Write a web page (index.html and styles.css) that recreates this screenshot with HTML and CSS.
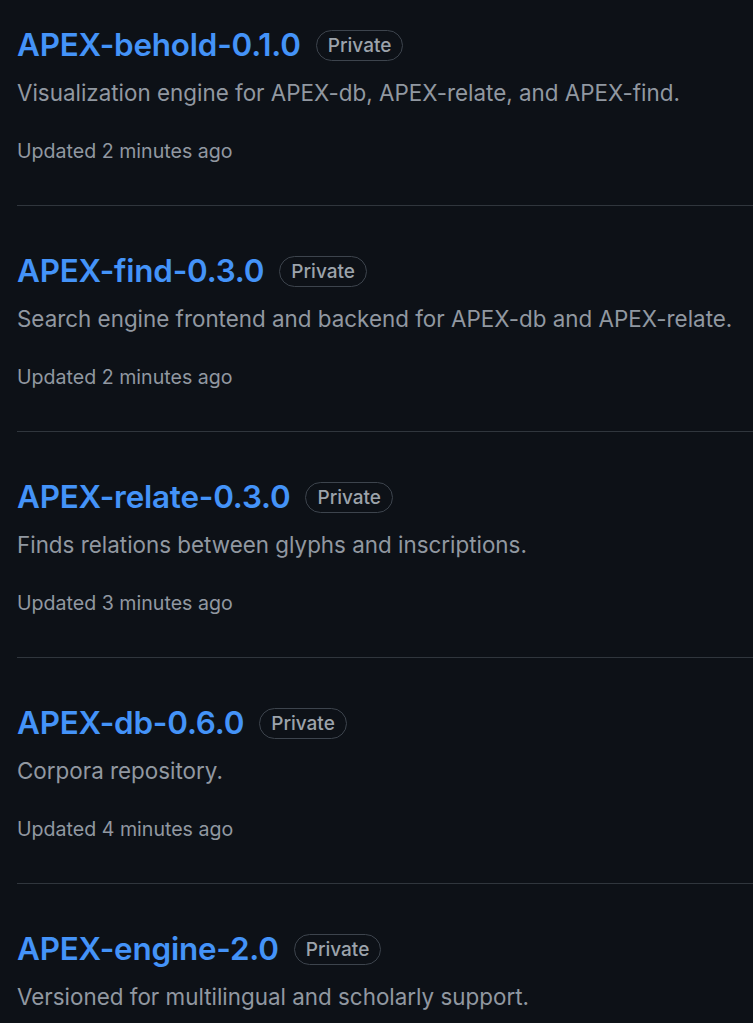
FILE: index.html
```html
<!DOCTYPE html>
<html lang="en">
<head>
<meta charset="utf-8">
<title>Repositories</title>
<link rel="stylesheet" href="styles.css">
</head>
<body>
<ul class="repo-list">
  <li class="repo">
    <div class="repo-head"><a class="repo-name" href="#">APEX-behold-0.1.0</a><span class="badge">Private</span></div>
    <p class="repo-desc">Visualization engine for APEX-db, APEX-relate, and APEX-find.</p>
    <div class="repo-meta">Updated 2 minutes ago</div>
  </li>
  <li class="repo">
    <div class="repo-head"><a class="repo-name" href="#">APEX-find-0.3.0</a><span class="badge">Private</span></div>
    <p class="repo-desc">Search engine frontend and backend for APEX-db and APEX-relate.</p>
    <div class="repo-meta">Updated 2 minutes ago</div>
  </li>
  <li class="repo">
    <div class="repo-head"><a class="repo-name" href="#">APEX-relate-0.3.0</a><span class="badge">Private</span></div>
    <p class="repo-desc">Finds relations between glyphs and inscriptions.</p>
    <div class="repo-meta">Updated 3 minutes ago</div>
  </li>
  <li class="repo">
    <div class="repo-head"><a class="repo-name" href="#">APEX-db-0.6.0</a><span class="badge">Private</span></div>
    <p class="repo-desc">Corpora repository.</p>
    <div class="repo-meta">Updated 4 minutes ago</div>
  </li>
  <li class="repo">
    <div class="repo-head"><a class="repo-name" href="#">APEX-engine-2.0</a><span class="badge">Private</span></div>
    <p class="repo-desc">Versioned for multilingual and scholarly support.</p>
  </li>
</ul>
</body>
</html>
```

FILE: styles.css
```css
html, body {
  margin: 0;
  padding: 0;
  background: #0d1117;
}
body {
  font-family: Inter, "Noto Sans", "Liberation Sans", sans-serif;
  color: #9198a1;
  overflow: hidden;
  height: 1023px;
}
.repo-list {
  list-style: none;
  margin: 0 0 0 17px;
  padding: 0;
}
.repo {
  padding: 41px 0 39px;
  border-bottom: 1.5px solid #30363d;
}
.repo:first-child {
  padding-top: 21px;
}
.repo:last-child {
  border-bottom: none;
}
.repo-head {
  display: flex;
  align-items: center;
  gap: 15px;
  height: 48px;
}
.repo-name {
  font-size: 31.4px;
  font-weight: 600;
  color: #4493f8;
  text-decoration: none;
  letter-spacing: -0.2px;
}
.badge {
  display: inline-flex;
  align-items: center;
  box-sizing: border-box;
  height: 31px;
  padding: 0 11px;
  border: 1.5px solid #3d444d;
  border-radius: 16px;
  font-size: 19px;
  font-weight: 500;
  color: #9ca3ab;
}
.repo-desc {
  margin: 6px 0 0;
  font-size: 22.4px;
  line-height: 36px;
  color: #9198a1;
}
.repo-meta {
  margin-top: 25px;
  font-size: 19.6px;
  line-height: 30px;
  color: #9198a1;
}
```
